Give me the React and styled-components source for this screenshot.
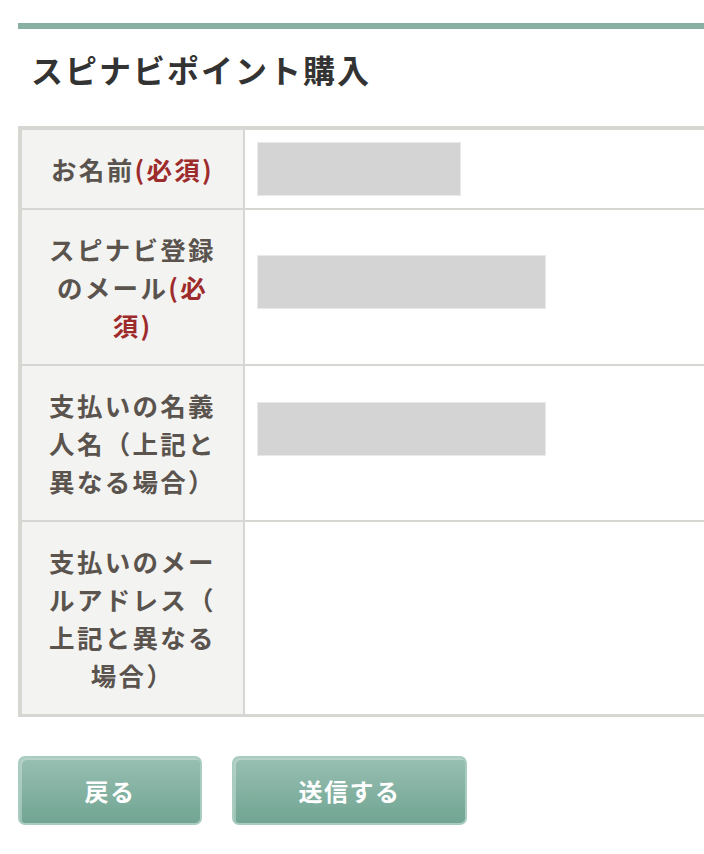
import React from 'react'
import styled, { createGlobalStyle } from 'styled-components'

const GlobalStyle = createGlobalStyle`
  html, body {
    margin: 0;
    padding: 0;
    background: #fff;
    overflow: hidden;
  }
  body {
    font-family: "Noto Sans CJK JP", "Noto Sans", sans-serif;
  }
`

const Page = styled.div`
  width: 760px;
  margin-left: 18px;
  padding-top: 23px;
  padding-bottom: 30px;
`

const TopBar = styled.div`
  height: 6px;
  background: #89b0a3;
`

const Title = styled.h1`
  margin: 20px 0 37px;
  padding-left: 13px;
  font-size: 32px;
  line-height: 40px;
  font-weight: 700;
  letter-spacing: 2px;
  color: #333;
`

const FormTable = styled.div`
  display: grid;
  grid-template-columns: 221px 1fr;
  gap: 2px;
  background: #d6d6d2;
  border: 4px solid #d6d6d2;
  border-bottom-width: 3px;
`

const Label = styled.div`
  background: #f3f3f1;
  padding: 20px 10px;
  font-size: 25.5px;
  line-height: 38px;
  font-weight: 700;
  letter-spacing: 2.3px;
  color: #5a534e;
  text-align: center;
  white-space: nowrap;
`

const Required = styled.span`
  color: #9e2b2c;
`

const ValueCell = styled.div`
  background: #fff;
  display: flex;
  align-items: center;
  padding-left: 12px;
`

const FakeInput = styled.input`
  box-sizing: border-box;
  width: ${({ $wide }) => ($wide ? '289px' : '204px')};
  height: 54px;
  margin: 0 0 ${({ $lift }) => $lift || 0}px;
  padding: 0 10px;
  background: #d4d4d4;
  border: 1px solid #e9e9e9;
  outline: none;
`

const Buttons = styled.div`
  display: flex;
  gap: 30px;
  margin-top: 39px;
`

const Button = styled.button`
  box-sizing: border-box;
  width: ${({ $width }) => $width}px;
  height: 69px;
  border: 2px solid #a9ccc0;
  border-radius: 7px;
  background: linear-gradient(to bottom, #98bfb2, #71a592);
  box-shadow: inset 2px 2px 0 rgba(255, 255, 255, 0.3);
  color: #fff;
  font-family: "Noto Sans CJK JP", "Noto Sans", sans-serif;
  font-size: 24px;
  font-weight: 700;
  letter-spacing: 1.5px;
  cursor: pointer;
`

export default function App() {
  return (
    <>
      <GlobalStyle />
      <Page>
        <TopBar />
        <Title>スピナビポイント購入</Title>
        <FormTable>
          <Label>
            お名前<Required>(必須)</Required>
          </Label>
          <ValueCell>
            <FakeInput readOnly />
          </ValueCell>

          <Label>
            スピナビ登録
            <br />
            のメール<Required>(必</Required>
            <br />
            <Required>須)</Required>
          </Label>
          <ValueCell>
            <FakeInput readOnly $wide $lift={10} />
          </ValueCell>

          <Label>
            支払いの名義
            <br />
            人名（上記と
            <br />
            異なる場合）
          </Label>
          <ValueCell>
            <FakeInput readOnly $wide $lift={28} />
          </ValueCell>

          <Label>
            支払いのメー
            <br />
            ルアドレス（
            <br />
            上記と異なる
            <br />
            場合）
          </Label>
          <ValueCell />
        </FormTable>
        <Buttons>
          <Button $width={184}>戻る</Button>
          <Button $width={235}>送信する</Button>
        </Buttons>
      </Page>
    </>
  )
}
